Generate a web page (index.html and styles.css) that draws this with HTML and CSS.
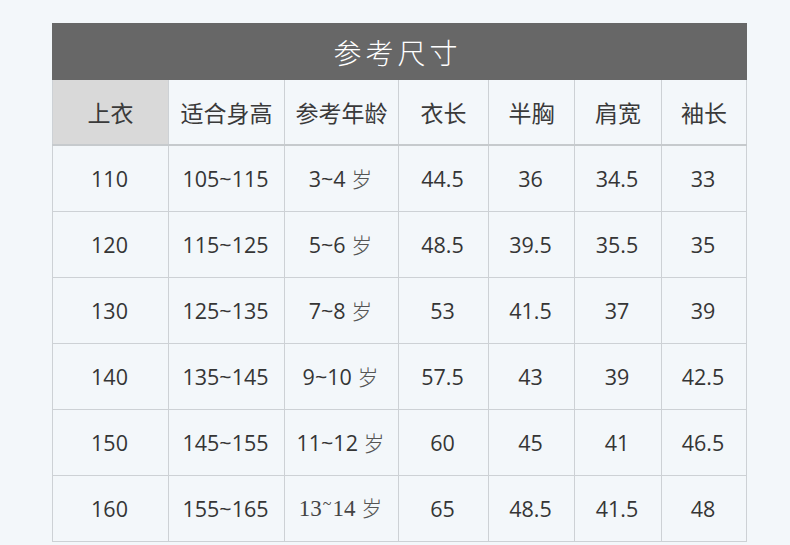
FILE: index.html
```html
<!DOCTYPE html>
<html lang="zh-CN">
<head>
<meta charset="utf-8">
<title>参考尺寸</title>
<link rel="stylesheet" href="styles.css">
</head>
<body>
<table class="size-table">
  <colgroup>
    <col class="c1"><col class="c2"><col class="c3"><col class="c4"><col class="c5"><col class="c6"><col class="c7">
  </colgroup>
  <thead>
    <tr class="title-row"><th colspan="7">参考尺寸</th></tr>
    <tr class="head-row">
      <th class="first">上衣</th><th>适合身高</th><th>参考年龄</th><th>衣长</th><th>半胸</th><th>肩宽</th><th>袖长</th>
    </tr>
  </thead>
  <tbody>
    <tr><td>110</td><td>105~115</td><td>3~4 <span class="sui">岁</span></td><td>44.5</td><td>36</td><td>34.5</td><td>33</td></tr>
    <tr><td>120</td><td>115~125</td><td>5~6 <span class="sui">岁</span></td><td>48.5</td><td>39.5</td><td>35.5</td><td>35</td></tr>
    <tr><td>130</td><td>125~135</td><td>7~8 <span class="sui">岁</span></td><td>53</td><td>41.5</td><td>37</td><td>39</td></tr>
    <tr><td>140</td><td>135~145</td><td>9~10 <span class="sui">岁</span></td><td>57.5</td><td>43</td><td>39</td><td>42.5</td></tr>
    <tr><td>150</td><td>145~155</td><td>11~12 <span class="sui">岁</span></td><td>60</td><td>45</td><td>41</td><td>46.5</td></tr>
    <tr><td>160</td><td>155~165</td><td class="serif">13<span class="tilde">~</span>14 <span class="sui">岁</span></td><td>65</td><td>48.5</td><td>41.5</td><td>48</td></tr>
  </tbody>
</table>
</body>
</html>
```

FILE: styles.css
```css
html, body {
  margin: 0;
  padding: 0;
  background: #f3f7fa;
}

body {
  padding: 23px 0 0 52px;
  font-family: "Open Sans", "Noto Sans CJK SC", sans-serif;
  color: #333333;
}

.size-table {
  width: 694px;
  table-layout: fixed;
  border-collapse: collapse;
  background: #f3f7fa;
}

.c1 { width: 116px; }
.c2 { width: 116px; }
.c3 { width: 114px; }
.c4 { width: 90px; }
.c5 { width: 86px; }
.c6 { width: 87px; }
.c7 { width: 85px; }

.title-row th {
  height: 55px;
  padding: 0;
  background: #676767;
  color: #ffffff;
  font-family: "Noto Sans CJK SC", sans-serif;
  font-weight: 300;
  font-size: 28px;
  letter-spacing: 4px;
  text-indent: -4px;
  border: 1px solid #676767;
  line-height: 1;
}

.head-row th {
  height: 64px;
  padding: 0;
  font-family: "Noto Sans CJK SC", sans-serif;
  font-weight: 400;
  font-size: 23px;
  color: #3a3a3a;
  border: 1px solid #cdd1d5;
  border-bottom: 2px solid #c6cacd;
  line-height: 1;
}

.head-row th.first {
  background: #d9d9d9;
}

td {
  height: 65px;
  padding: 0 2px 0 0;
  text-align: center;
  font-size: 21.5px;
  color: #353535;
  border: 1px solid #cdd1d5;
  line-height: 1;
}

.sui {
  font-family: "Noto Sans CJK SC", sans-serif;
  font-weight: 300;
  color: #555555;
  font-size: 21px;
}

td.serif {
  font-family: "Liberation Serif", "Noto Sans CJK SC", serif;
  font-size: 23px;
  color: #444444;
}

.tilde {
  vertical-align: 0.45em;
  font-size: 16px;
  padding: 0 1px;
}
```
